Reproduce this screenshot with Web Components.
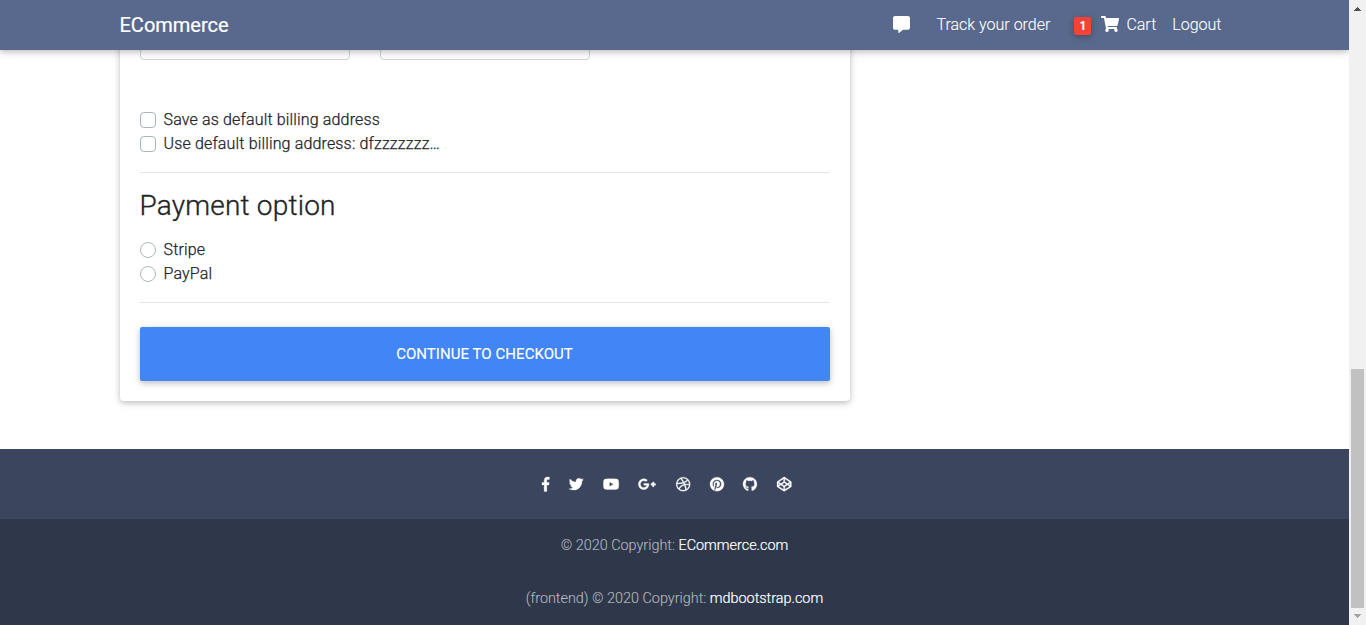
<!DOCTYPE html>
<html lang="en">
<head>
<meta charset="utf-8">
<title>ECommerce - Checkout</title>
<style>
html,body{margin:0;height:100%;overflow:hidden}
body{font:300 16px/24px Roboto,sans-serif;color:#212529;background:#fff}
</style>
</head>
<body>
<shop-page></shop-page>
<script>
const ICONS = {
  comment: [512, 'M448 0H64C28.7 0 0 28.7 0 64v288c0 35.3 28.7 64 64 64h96v84c0 9.8 11.2 15.5 19.1 9.7L304 416h144c35.3 0 64-28.7 64-64V64c0-35.3-28.7-64-64-64z'],
  cart: [576, 'M528.12 301.319l47.273-208C578.806 78.301 567.391 64 551.99 64H159.208l-9.166-44.81C147.758 8.021 137.93 0 126.529 0H24C10.745 0 0 10.745 0 24v16c0 13.255 10.745 24 24 24h69.883l70.248 343.435C147.325 417.1 136 435.222 136 456c0 30.928 25.072 56 56 56s56-25.072 56-56c0-15.674-6.447-29.835-16.824-40h209.647C430.447 426.165 424 440.326 424 456c0 30.928 25.072 56 56 56s56-25.072 56-56c0-22.172-12.888-41.332-31.579-50.405l5.517-24.276c3.413-15.018-8.002-29.319-23.403-29.319H218.117l-6.545-32h293.145c11.206 0 20.92-7.754 23.403-18.681z'],
  facebook: [264, 'M215.8 85H264V3.6C255.7 2.5 227.1 0 193.8 0 124.3 0 76.7 42.4 76.7 120.3V192H0v91h76.7v229h94V283h73.6l11.7-91h-85.3v-62.7c0-26.3 7.3-44.3 45.1-44.3z'],
  twitter: [512, 'M459.37 151.716c.325 4.548.325 9.097.325 13.645 0 138.72-105.583 298.558-298.558 298.558-59.452 0-114.68-17.219-161.137-47.106 8.447.974 16.568 1.299 25.34 1.299 49.055 0 94.213-16.568 130.274-44.832-46.132-.975-84.792-31.188-98.112-72.772 6.498.974 12.995 1.624 19.818 1.624 9.421 0 18.843-1.3 27.614-3.573-48.081-9.747-84.143-51.98-84.143-102.985v-1.299c13.969 7.797 30.214 12.67 47.431 13.319-28.264-18.843-46.781-51.005-46.781-87.391 0-19.492 5.197-37.36 14.294-52.954 51.655 63.675 129.3 105.258 216.365 109.807-1.624-7.797-2.599-15.918-2.599-24.04 0-57.828 46.782-104.934 104.934-104.934 30.213 0 57.502 12.67 76.67 33.137 23.715-4.548 46.456-13.32 66.599-25.34-7.798 24.366-24.366 44.833-46.132 57.827 21.117-2.273 41.584-8.122 60.426-16.243-14.292 20.791-32.161 39.308-52.628 54.253z'],
  youtube: [576, 'M549.655 124.083c-6.281-23.65-24.787-42.276-48.284-48.597C458.781 64 288 64 288 64S117.22 64 74.629 75.486c-23.497 6.322-42.003 24.947-48.284 48.597-11.412 42.867-11.412 132.305-11.412 132.305s0 89.438 11.412 132.305c6.281 23.65 24.787 41.5 48.284 47.821C117.22 448 288 448 288 448s170.78 0 213.371-11.486c23.497-6.321 42.003-24.171 48.284-47.821 11.412-42.867 11.412-132.305 11.412-132.305s0-89.438-11.412-132.305zm-317.51 213.508V175.185l142.739 81.205-142.739 81.201z'],
  google: [640, 'M386.061 228.496c1.834 9.692 3.143 19.384 3.143 31.956C389.204 370.205 315.599 448 204.8 448c-106.084 0-192-85.915-192-192s85.916-192 192-192c51.864 0 95.083 18.859 128.611 50.292l-52.126 50.03c-14.145-13.621-39.028-29.599-76.485-29.599-65.484 0-118.92 54.221-118.92 121.277 0 67.056 53.436 121.277 118.92 121.277 75.961 0 104.513-54.745 108.965-82.773H204.8v-66.009h181.261zm185.406 6.437V179.2h-56.001v55.733h-55.733v56.001h55.733v55.733h56.001v-55.733H627.2v-56.001h-55.733z'],
  dribbble: [512, 'M256 8C119.252 8 8 119.252 8 256s111.252 248 248 248 248-111.252 248-248S392.748 8 256 8zm163.97 114.366c29.503 36.046 47.369 81.957 47.835 131.955-6.984-1.477-77.018-15.682-147.502-6.818-5.752-14.041-11.181-26.393-18.617-41.614 78.321-31.977 113.818-77.482 118.284-83.523zM396.421 97.87c-3.81 5.427-35.697 48.286-111.021 76.519-34.712-63.776-73.185-116.168-79.04-124.008 67.176-16.193 137.966 1.27 190.061 47.489zm-230.48-33.25c5.585 7.659 43.438 60.116 78.537 122.509-99.087 26.313-186.36 25.934-195.834 25.809C62.38 147.205 106.678 92.573 165.941 64.62zM44.17 256.323c0-2.166.043-4.322.108-6.473 9.268.19 111.92 1.513 217.706-30.146 6.064 11.868 11.857 23.915 17.174 35.949-76.599 21.575-146.194 83.527-180.531 142.306C64.794 360.405 44.17 310.73 44.17 256.323zm81.807 167.113c22.127-45.233 82.178-103.622 167.579-132.756 29.74 77.283 42.039 142.053 45.189 160.638-68.112 29.013-150.015 21.053-212.768-27.882zm248.38 8.489c-2.171-12.886-13.446-74.897-41.152-151.033 66.38-10.626 124.7 6.768 131.947 9.055-9.442 58.941-43.273 109.844-90.795 141.978z'],
  pinterest: [496, 'M496 256c0 137-111 248-248 248-25.6 0-50.2-3.9-73.4-11.1 10.1-16.5 25.2-43.5 30.8-65 3-11.6 15.4-59 15.4-59 8.1 15.4 31.7 28.5 56.8 28.5 74.8 0 128.7-68.8 128.7-154.3 0-81.9-66.9-143.2-152.9-143.2-107 0-163.9 71.8-163.9 150.1 0 36.4 19.4 81.7 50.3 96.1 4.7 2.2 7.2 1.2 8.3-3.3.8-3.4 5-20.3 6.9-28.1.6-2.5.3-4.7-1.7-7.1-10.1-12.5-18.3-35.3-18.3-56.6 0-54.7 41.4-107.6 112-107.6 60.9 0 103.6 41.5 103.6 100.9 0 67.1-33.9 113.6-78 113.6-24.3 0-42.6-20.1-36.7-44.8 7-29.5 20.5-61.3 20.5-82.6 0-19-10.2-34.9-31.4-34.9-24.9 0-44.9 25.7-44.9 60.2 0 22 7.4 36.8 7.4 36.8s-24.5 103.8-29 123.2c-5 21.4-3 51.6-.9 71.2C65.4 450.9 0 361.1 0 256 0 119 111 8 248 8s248 111 248 248z'],
  github: [496, 'M165.9 397.4c0 2-2.3 3.6-5.2 3.6-3.3.3-5.6-1.3-5.6-3.6 0-2 2.3-3.6 5.2-3.6 3-.3 5.6 1.3 5.6 3.6zM244.8 8C106.1 8 0 113.3 0 252c0 110.9 69.8 205.8 169.5 239.2 12.8 2.3 17.3-5.6 17.3-12.1 0-6.2-.3-40.4-.3-61.4 0 0-70 15-84.7-29.8 0 0-11.4-29.1-27.8-36.6 0 0-22.9-15.7 1.6-15.4 0 0 24.9 2 38.6 25.8 21.9 38.6 58.6 27.5 72.9 20.9 2.3-16 8.8-27.1 16-33.7-55.9-6.2-112.3-14.3-112.3-110.5 0-27.5 7.6-41.3 23.6-58.9-2.6-6.5-11.1-33.3 2.6-67.9 20.9-6.5 69 27 69 27 20-5.6 41.5-8.5 62.8-8.5s42.8 2.9 62.8 8.5c0 0 48.1-33.6 69-27 13.7 34.7 5.2 61.4 2.6 67.9 16 17.7 25.8 31.5 25.8 58.9 0 96.5-58.9 104.2-114.8 110.5 9.2 7.9 17 22.9 17 46.4 0 33.7-.3 75.4-.3 83.6 0 6.5 4.6 14.4 17.3 12.1C428.2 457.8 496 362.9 496 252 496 113.3 383.5 8 244.8 8z'],
  codepen: [512, 'M502.285 159.704l-234-156c-7.987-4.915-16.511-4.96-24.571 0l-234 156C3.714 163.703 0 170.847 0 177.989v155.999c0 7.143 3.714 14.286 9.715 18.286l234 156.022c7.987 4.915 16.511 4.96 24.571 0l234-156.022c6-3.999 9.715-11.143 9.715-18.286V177.989c-.001-7.142-3.715-14.286-9.716-18.285zM278 63.131l172.286 114.858-76.857 51.429L278 165.703V63.131zm-44 0v102.572l-95.429 63.715-76.857-51.429L234 63.131zM44 219.132l55.143 36.857L44 292.847v-73.715zm190 229.715L61.714 333.989l76.857-51.429L234 346.275v102.572zm22-140.858l-77.715-52 77.715-52 77.715 52-77.715 52zm22 140.858V346.275l95.429-63.715 76.857 51.429L278 448.847zm190-156l-55.143-36.857L468 219.132v73.715z']
};

function define(name, html, setup) {
  customElements.define(name, class extends HTMLElement {
    constructor() {
      super();
      this.attachShadow({mode: 'open'});
    }
    connectedCallback() {
      this.shadowRoot.innerHTML = html;
      if (setup) setup(this, this.shadowRoot);
    }
  });
}

define('fa-icon', `<style>
  :host{display:inline-block;flex:none;height:1em;line-height:0}
  svg{display:block;height:1em;fill:currentColor;stroke:currentColor;stroke-width:var(--icon-stroke,0);overflow:visible}
</style><svg><path/></svg>`, (el, root) => {
  const [w, d] = ICONS[el.getAttribute('name')];
  const svg = root.querySelector('svg');
  svg.setAttribute('viewBox', `0 0 ${w} 512`);
  svg.style.width = `${w / 512}em`;
  root.querySelector('path').setAttribute('d', d);
});

define('nav-bar', `<style>
  :host{display:block;flex:none;height:50px;background:#59698d;color:#fff;position:relative;z-index:2;
    box-shadow:0 2px 5px 0 rgba(0,0,0,.16),0 2px 10px 0 rgba(0,0,0,.12)}
  .in{width:1110px;height:50px;margin:0 auto;display:flex;align-items:center}
  .brand{font-size:20px;font-weight:400;margin-right:auto;-webkit-text-stroke:.2px}
  nav{display:flex;align-items:center;padding-right:8px}
  .msg{font-size:17px;margin:-1px 26.5px 0 0}
  .track{margin-right:24px}
  .badge{box-sizing:border-box;width:17px;height:18px;border-radius:2px;background:#f44336;font-size:12px;font-weight:700;
    line-height:18px;text-align:center;margin:2px 10px 0 0;box-shadow:0 2px 5px 0 rgba(0,0,0,.16),0 2px 10px 0 rgba(0,0,0,.12)}
  .cart{font-size:16px;margin:-2px 7px 0 0}
  .ct{margin-right:16px}
  span{-webkit-text-stroke:.1px}
</style><div class="in"><div class="brand">ECommerce</div><nav>
<fa-icon class="msg" name="comment"></fa-icon><span class="track">Track your order</span><div class="badge">1</div>
<fa-icon class="cart" name="cart"></fa-icon><span class="ct">Cart</span><span>Logout</span></nav></div>`);

define('check-option', `<style>
  :host{display:flex;align-items:center;height:24px;gap:8px}
  i{box-sizing:border-box;width:16px;height:16px;border:1px solid #adb5bd;border-radius:4px;background:#fff}
  :host([radio]) i{border-radius:50%}
  span{letter-spacing:.155px;-webkit-text-stroke:.25px}
</style><i></i><span><slot></slot></span>`);

define('checkout-card', `<style>
  :host{display:block;box-sizing:border-box;width:730px;height:371px;margin-top:-20px;padding:20px 20px 0;border-radius:4px;background:#fff;
    box-shadow:0 2px 5px 0 rgba(0,0,0,.16),0 2px 10px 0 rgba(0,0,0,.12)}
  .fields{display:flex;gap:30px;height:10px;margin-bottom:48px}
  .fields div{box-sizing:border-box;width:210px;height:38px;margin-top:-28px;border:1px solid #ced4da;border-radius:4px}
  hr{border:0;border-top:1px solid rgba(0,0,0,.1);margin:16px 0}
  h3{font-size:28px;line-height:33.6px;font-weight:300;margin:0 0 15.4px;letter-spacing:.2px;-webkit-text-stroke:.35px}
  button{display:block;width:100%;height:54px;margin:24px 0 0;padding:0;border:0;border-radius:2px;background:#4285f4;color:#fff;
    font:400 15px/22px Roboto,sans-serif;letter-spacing:.05px;-webkit-text-stroke:.15px;text-transform:uppercase;box-shadow:0 2px 5px 0 rgba(0,0,0,.16),0 2px 10px 0 rgba(0,0,0,.12)}
</style><div class="fields"><div></div><div></div></div>
<check-option>Save as default billing address</check-option>
<check-option>Use default billing address: dfzzzzzzz…</check-option>
<hr><h3>Payment option</h3>
<check-option radio>Stripe</check-option><check-option radio>PayPal</check-option>
<hr><button>Continue to checkout</button>`);

define('page-footer', `<style>
  :host{display:block;height:176px;background:#3b465e;color:#fff}
  .social{box-sizing:border-box;display:flex;justify-content:center;align-items:center;gap:19.5px;height:70px;padding:0 16px .4px 0;font-size:14.4px;--icon-stroke:10}
  .copy{background:rgba(0,0,0,.2);height:106px;text-align:center;font-size:14.4px;color:rgba(255,255,255,.6);-webkit-text-stroke:.1px}
  .copy div{height:53px;line-height:53px}
  b{font-weight:300;color:#fff;-webkit-text-stroke:.2px}
</style><div class="social"></div>
<div class="copy"><div>© 2020 Copyright: <b>ECommerce.com</b></div><div>(frontend) © 2020 Copyright: <b>mdbootstrap.com</b></div></div>`, (el, root) => {
  root.querySelector('.social').innerHTML = ['facebook','twitter','youtube','google','dribbble','pinterest','github','codepen']
    .map(n => `<fa-icon name="${n}"></fa-icon>`).join('');
});

define('scroll-track', `<style>
  :host{display:flex;flex-direction:column;align-items:center;width:17px;background:#f1f1f1}
  svg{display:block;width:17px;height:17px}
  .thumb{width:13px;height:239px;margin-top:352px;background:#c1c1c1}
</style><svg shape-rendering="crispEdges" fill="#505050"><path d="M8 7h1v1h1v1h1v1h1v1H5v-1h1V9h1V8h1z"/></svg>
<div class="thumb"></div><svg shape-rendering="crispEdges" fill="#a3a3a3"><path d="M5 6h7v1h-1v1h-1v1H9v1H8V9H7V8H6V7H5z"/></svg>`);

define('shop-page', `<style>
  :host{display:flex;width:1366px;height:625px}
  .view{width:1349px;display:flex;flex-direction:column;overflow:hidden}
  main{flex:1;width:1110px;margin:0 auto}
</style><div class="view"><nav-bar></nav-bar><main><checkout-card></checkout-card></main><page-footer></page-footer></div><scroll-track></scroll-track>`);
</script>
</body>
</html>
